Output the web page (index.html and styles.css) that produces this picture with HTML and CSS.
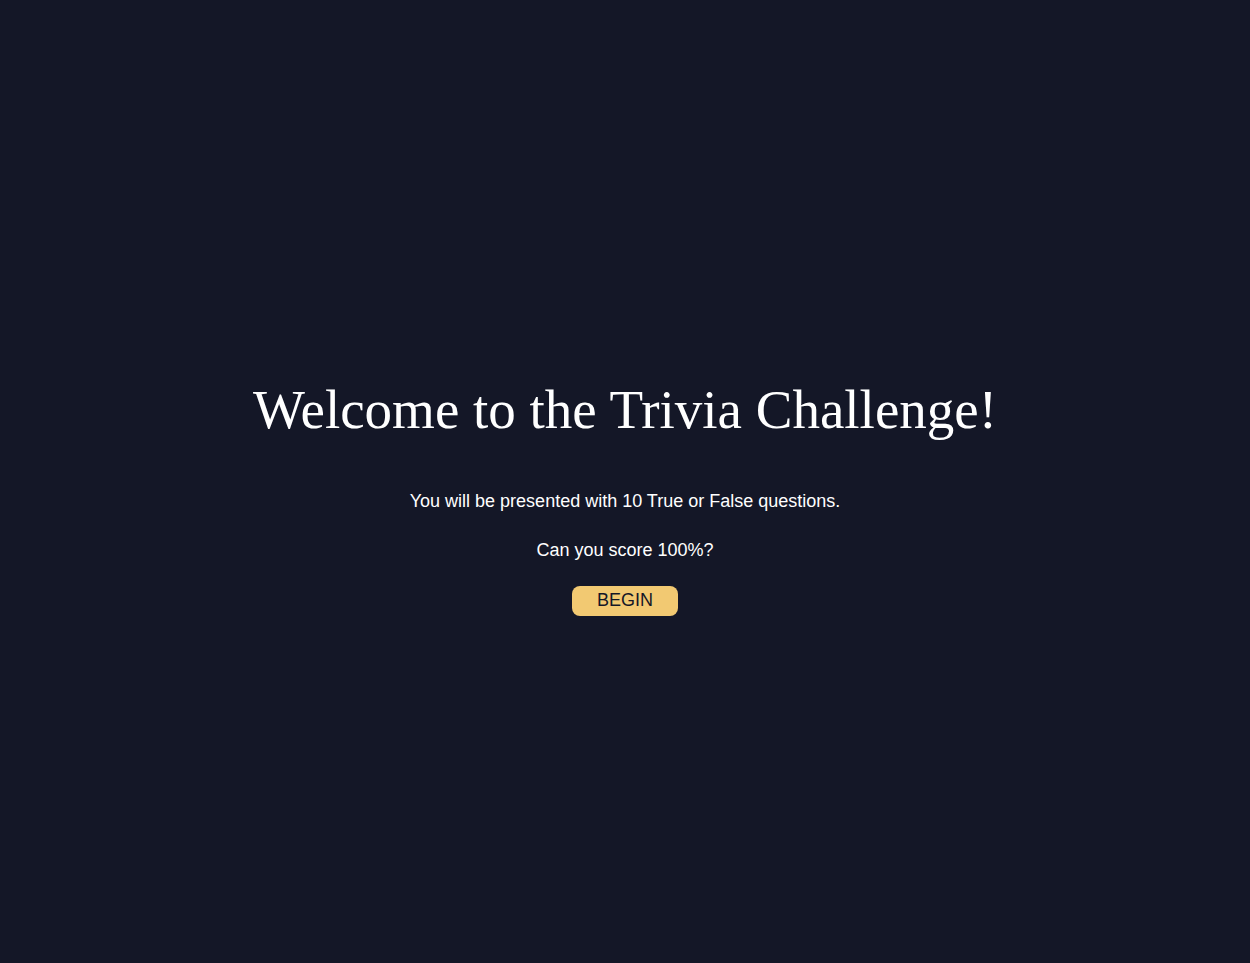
FILE: index.html
```html
<!DOCTYPE html>
<html>
<head>
<meta charset="utf-8">
<link rel="stylesheet" href="styles.css">
</head>
<body>
<main class="screen">
  <h1 class="title">Welcome to the Trivia Challenge!</h1>
  <p class="text">You will be presented with 10 True or False questions.</p>
  <p class="text text-last">Can you score 100%?</p>
  <button class="begin">BEGIN</button>
</main>
</body>
</html>
```
FILE: styles.css
```css
html, body {
  margin: 0;
  padding: 0;
  background: #141727;
  height: 100%;
}
.screen {
  min-height: 100vh;
  box-sizing: border-box;
  padding-top: 30px;
  display: flex;
  flex-direction: column;
  align-items: center;
  justify-content: center;
  color: #ffffff;
  font-family: "Liberation Sans", Arial, sans-serif;
}
.title {
  font-family: "Liberation Serif", "Times New Roman", serif;
  font-weight: normal;
  font-size: 55px;
  margin: 0 0 50px;
}
.text {
  font-size: 18px;
  margin: 0 0 28px;
}
.text-last {
  margin-bottom: 25px;
}
.begin {
  font-family: "Liberation Sans", Arial, sans-serif;
  font-size: 18px;
  color: #141727;
  background: #f2c972;
  border: none;
  border-radius: 8px;
  width: 106px;
  height: 30px;
  padding: 0;
  cursor: pointer;
}
```
